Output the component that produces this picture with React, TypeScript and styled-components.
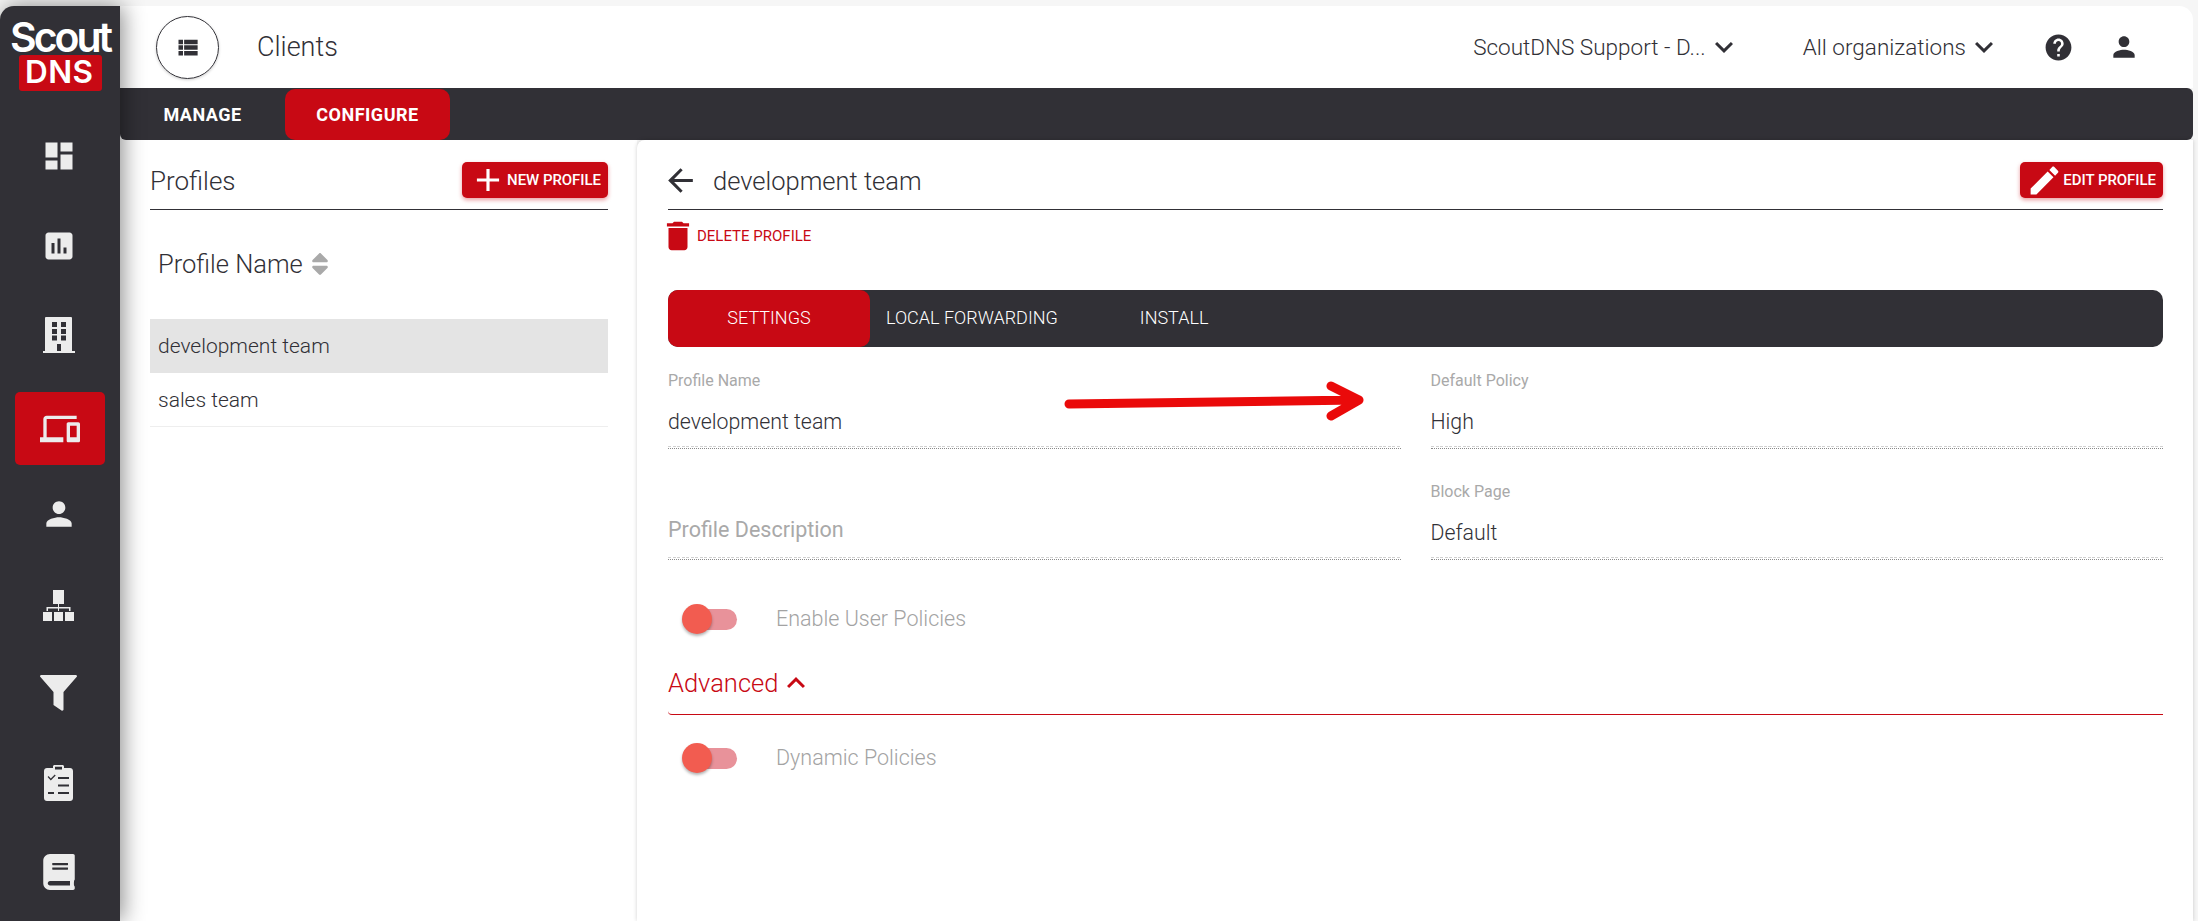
import styled, { createGlobalStyle } from "styled-components";
import { FaBook, FaSort } from "react-icons/fa";

const GlobalStyle = createGlobalStyle`
  html, body {
    margin: 0;
    padding: 0;
    background: #f6f6f6;
    overflow: hidden;
  }
  * {
    box-sizing: border-box;
  }
`;

const RED = "#c80914";
const DARK = "#313036";

const Page = styled.div`
  width: 2198px;
  height: 921px;
  padding: 6px 5px 0 0;
  display: flex;
  overflow: hidden;
  font-family: Roboto, "Liberation Sans", sans-serif;
  color: #313036;
`;

const Sidebar = styled.aside`
  width: 120px;
  flex: none;
  height: 915px;
  background: ${DARK};
  border-top-left-radius: 14px;
  box-shadow: 3px 0 22px rgba(0, 0, 0, 0.45);
  position: relative;
  z-index: 2;
  display: flex;
  flex-direction: column;
  align-items: center;
`;

const LogoMark = styled.svg`
  width: 120px;
  height: 111px;
  flex: none;
  display: block;
  font-family: Inter, sans-serif;
  font-weight: 600;
  fill: #fff;
`;

const NavItem = styled.div<{ $gap: number; $active?: boolean }>`
  width: 90px;
  height: 73px;
  flex: none;
  margin-top: ${(p) => p.$gap}px;
  padding-right: ${(p) => (p.$active ? 0 : 3)}px;
  border-radius: 5px;
  background: ${(p) => (p.$active ? RED : "transparent")};
  color: #ececec;
  display: flex;
  align-items: center;
  justify-content: center;
`;

const Glyph = styled.svg<{ $w: number; $h?: number }>`
  width: ${(p) => p.$w}px;
  height: ${(p) => p.$h ?? p.$w}px;
  flex: none;
  display: block;
  fill: currentColor;
`;

const BookGlyph = styled(FaBook)`
  width: 32px;
  height: 36px;
`;

const SortGlyph = styled(FaSort)`
  width: 18px;
  height: 28px;
  margin-left: 8px;
  color: #a9a9a9;
`;

type IconProps = { d: string; w: number; h?: number };

const Icon = ({ d, w, h }: IconProps) => (
  <Glyph $w={w} $h={h} viewBox="0 0 24 24">
    <path d={d} />
  </Glyph>
);

const paths = {
  dashboard: "M3 13h8V3H3v10zm0 8h8v-6H3v6zm10 0h8V11h-8v10zm0-18v6h8V3h-8z",
  chart:
    "M19 3H5c-1.1 0-2 .9-2 2v14c0 1.1.9 2 2 2h14c1.1 0 2-.9 2-2V5c0-1.1-.9-2-2-2zM9 17H7v-7h2v7zm4 0h-2V7h2v10zm4 0h-2v-4h2v4z",
  devices:
    "M4 6h18V4H4c-1.1 0-2 .9-2 2v11H0v3h14v-3H4V6zm19 2h-6c-.55 0-1 .45-1 1v10c0 .55.45 1 1 1h6c.55 0 1-.45 1-1V9c0-.55-.45-1-1-1zm-1 9h-4v-7h4v7z",
  person:
    "M12 12c2.21 0 4-1.79 4-4s-1.79-4-4-4-4 1.79-4 4 1.79 4 4 4zm0 2c-2.67 0-8 1.34-8 4v2h16v-2c0-2.66-5.33-4-8-4z",
  viewList:
    "M4 14h4v-4H4v4zm0 5h4v-4H4v4zM4 9h4V5H4v4zm5 5h12v-4H9v4zm0 5h12v-4H9v4zM9 5v4h12V5H9z",
  chevronDown: "M16.59 8.59L12 13.17 7.41 8.59 6 10l6 6 6-6z",
  chevronUp: "M12 8l-6 6 1.41 1.41L12 10.83l4.59 4.58L18 14z",
  help: "M12 2C6.48 2 2 6.48 2 12s4.48 10 10 10 10-4.48 10-10S17.52 2 12 2zm1 17h-2v-2h2v2zm2.07-7.75l-.9.92C13.45 12.9 13 13.5 13 15h-2v-.5c0-1.1.45-2.1 1.17-2.83l1.24-1.26c.37-.36.59-.86.59-1.41 0-1.1-.9-2-2-2s-2 .9-2 2H8c0-2.21 1.79-4 4-4s4 1.79 4 4c0 .88-.36 1.68-.93 2.25z",
  plus: "M19 13h-6v6h-2v-6H5v-2h6V5h2v6h6v2z",
  edit: "M3 17.25V21h3.75L17.81 9.94l-3.75-3.75L3 17.25zM20.71 7.04c.39-.39.39-1.02 0-1.41l-2.34-2.34c-.39-.39-1.02-.39-1.41 0l-1.83 1.83 3.75 3.75 1.83-1.83z",
  back: "M20 11H7.83l5.59-5.59L12 4l-8 8 8 8 1.41-1.41L7.83 13H20v-2z",
  trash:
    "M6 19c0 1.1.9 2 2 2h8c1.1 0 2-.9 2-2V7H6v12zM19 4h-3.5l-1-1h-5l-1 1H5v2h14V4z",
};

const BuildingIcon = () => (
  <Glyph $w={32} $h={36} viewBox="0 0 32 36">
    <path
      fillRule="evenodd"
      d="M2 1a1 1 0 0 1 1-1h25a1 1 0 0 1 1 1v33h3v2H0v-2h2V1zm7 4v5h5V5H9zm9 0v5h5V5h-5zM9 12v5h5v-5H9zm9 0v5h5v-5h-5zM9 18.500v5h5v-5H9zm9 0v5h5v-5h-5zM14 27v7h4v-7h-4z"
    />
  </Glyph>
);

const OrgIcon = () => (
  <Glyph $w={31} $h={31} viewBox="0 0 31 31">
    <path d="M10 0h11v14H10zM15 14h1v3h11.500v4h-1.500v-2.500h-10V21h-1v-2.500H5V21H3.500v-4H15zM0 22h9v9H0zM11 22h9v9h-9zM22 22h9v9h-9z" />
  </Glyph>
);

const FilterIcon = () => (
  <Glyph $w={37} $h={36} viewBox="0 0 37 36">
    <path d="M0 1.500C0 .5.5 0 1.500 0h34c1 0 1.500.5 1.500 1.500L23.500 17v17.500c0 1-1 1.500-2 1l-8-5.500V17L0 1.500z" />
  </Glyph>
);

const ChecklistIcon = () => (
  <Glyph $w={29} $h={36} viewBox="0 0 29 36">
    <path
      fillRule="evenodd"
      d="M9 3V1.500C9 .7 9.700 0 10.500 0h8c.8 0 1.500.7 1.500 1.500V3h6c1.700 0 3 1.300 3 3v27c0 1.700-1.300 3-3 3H3c-1.700 0-3-1.300-3-3V6c0-1.700 1.300-3 3-3h6zm2-1.200V4.500h7V1.800h-7zM4.500 11 6.800 13.500l4-4 .9 1-4.900 5-3.200-3.500.9-1zM14 12v2h11v-2H14zM14 19.500v2h11v-2H14zM4 27v2h6v-2H4zm10 0v2h11v-2H14z"
    />
  </Glyph>
);

const Main = styled.div`
  flex: 1;
  min-width: 0;
  display: flex;
  flex-direction: column;
`;

const Header = styled.header`
  height: 82px;
  flex: none;
  background: #fff;
  border-top-right-radius: 14px;
  display: flex;
  align-items: center;
  padding: 0 53px 0 36px;
`;

const RoundButton = styled.div`
  width: 63px;
  height: 63px;
  border-radius: 50%;
  border: 1.5px solid ${DARK};
  box-shadow: 0 1px 3px rgba(0, 0, 0, 0.2);
  display: flex;
  align-items: center;
  justify-content: center;
  color: ${DARK};
`;

const PageTitle = styled.h1`
  margin: 0 auto 0 38px;
  font-weight: 300;
  font-size: 27px;
  line-height: 36px;
`;

const Picker = styled.div<{ $gap: number }>`
  display: flex;
  align-items: center;
  margin-right: ${(p) => p.$gap}px;
  font-weight: 300;
  font-size: 22.5px;
  color: #313036;
`;

const HeaderIcons = styled.div`
  display: flex;
  align-items: center;
  gap: 34px;
  color: ${DARK};
`;

const TopTabs = styled.nav`
  height: 52px;
  flex: none;
  background: ${DARK};
  border-radius: 0 6px 6px 6px;
  display: flex;
`;

const TopTab = styled.div<{ $active?: boolean }>`
  width: 165px;
  height: 51px;
  margin-top: 1px;
  border-radius: 10px;
  background: ${(p) => (p.$active ? RED : "transparent")};
  color: #fff;
  font-weight: 700;
  font-size: 18px;
  letter-spacing: 0.5px;
  display: flex;
  align-items: center;
  justify-content: center;
`;

const Content = styled.div`
  flex: 1;
  min-height: 0;
  display: flex;
`;

const ListPanel = styled.section`
  width: 517px;
  flex: none;
  background: #fff;
  padding: 22px 29px 0 30px;
`;

const DetailPanel = styled.section`
  flex: 1;
  min-width: 0;
  background: #fff;
  border-top-left-radius: 8px;
  box-shadow: 0 0 4px rgba(0, 0, 0, 0.18);
  padding: 22px 30px 0 31px;
  position: relative;
`;

const PanelHeader = styled.div`
  height: 48px;
  border-bottom: 1.5px solid ${DARK};
  padding-bottom: 11px;
  display: flex;
  align-items: center;
  justify-content: space-between;
`;

const PanelTitle = styled.h2`
  margin: 2px 0 0;
  font-weight: 300;
  font-size: 26px;
  line-height: 36px;
`;

const BackTitle = styled.div`
  display: flex;
  align-items: center;
  gap: 14px;
  margin-left: -6px;
`;

const ProfileTitle = styled.h2`
  margin: 2px 0 0;
  font-weight: 300;
  font-size: 25.5px;
  line-height: 36px;
  color: #313036;
`;

const RedButton = styled.div<{ $pad: number }>`
  height: 36px;
  padding: 0 7px 0 ${(p) => p.$pad}px;
  border-radius: 5px;
  background: ${RED};
  box-shadow: 0 2px 4px rgba(200, 9, 20, 0.4);
  color: #fff;
  font-weight: 500;
  font-size: 15px;
  letter-spacing: -0.05px;
  display: flex;
  align-items: center;
  white-space: nowrap;
`;

const ColumnHead = styled.div`
  height: 109px;
  padding: 0 0 2px 8px;
  display: flex;
  align-items: center;
  font-weight: 300;
  font-size: 25.5px;
`;

const ProfileRow = styled.div<{ $selected?: boolean }>`
  height: 54px;
  padding-left: 8px;
  display: flex;
  align-items: center;
  background: ${(p) => (p.$selected ? "#e4e4e4" : "#fff")};
  border-bottom: 1px solid ${(p) => (p.$selected ? "#e4e4e4" : "#eee")};
  font-weight: 300;
  font-size: 21px;
  color: #313036;
`;

const DeleteLink = styled.div`
  height: 27px;
  margin-top: 12px;
  margin-left: -9px;
  display: flex;
  align-items: center;
  color: ${RED};
  font-size: 15px;
`;

const SubTabs = styled.div`
  height: 57px;
  margin-top: 41px;
  border-radius: 10px;
  background: ${DARK};
  display: flex;
  align-items: center;
  color: #fff;
  font-weight: 300;
  font-size: 18px;
`;

const SubTabActive = styled.div`
  width: 202px;
  height: 57px;
  padding-bottom: 2px;
  border-radius: 10px;
  background: ${RED};
  display: flex;
  align-items: center;
  justify-content: center;
`;

const SubTabRest = styled.div`
  display: flex;
  gap: 82px;
  padding: 0 0 2px 16px;
`;

const FormGrid = styled.div`
  margin-top: 24px;
  display: grid;
  grid-template-columns: 1fr 1fr;
  column-gap: 30px;
  row-gap: 33px;
`;

const Field = styled.div`
  height: 78px;
  border-bottom: 1px dotted #8a8a8a;
  display: flex;
  flex-direction: column;
  &::after {
    content: "";
    height: 1px;
    margin: auto 0 1px;
    background: repeating-linear-gradient(90deg, #d2d2d2 0 3px, transparent 3px 4.5px);
  }
`;

const FieldLabel = styled.label`
  height: 20px;
  line-height: 20px;
  font-size: 16px;
  color: #a9a9a9;
`;

const FieldValue = styled.div<{ $placeholder?: boolean }>`
  margin-top: ${(p) => (p.$placeholder ? 34 : 17)}px;
  height: 28px;
  line-height: 28px;
  font-size: ${(p) => (p.$placeholder ? 21.5 : 21.3)}px;
  font-weight: ${(p) => (p.$placeholder ? 400 : 300)};
  color: ${(p) => (p.$placeholder ? "#a9a9a9" : "#313036")};
`;

const ToggleRow = styled.div<{ $top: number }>`
  margin-top: ${(p) => p.$top}px;
  height: 30px;
  padding-left: 14px;
  display: flex;
  align-items: center;
  gap: 39px;
`;

const Track = styled.div`
  width: 55px;
  height: 21px;
  padding-left: 8px;
  position: relative;
  &::before {
    content: "";
    display: block;
    height: 21px;
    border-radius: 11px;
    background: #e8929a;
  }
`;

const Knob = styled.span`
  position: absolute;
  left: 0;
  top: -5px;
  width: 30px;
  height: 30px;
  border-radius: 50%;
  background: #f25c50;
  box-shadow: 0 2px 3px rgba(0, 0, 0, 0.3);
`;

const ToggleLabel = styled.span`
  margin-bottom: 2px;
  font-weight: 300;
  font-size: 21.5px;
  color: #a3a3a3;
`;

const Advanced = styled.div`
  margin-top: 31px;
  height: 50px;
  padding-bottom: 13px;
  border-bottom: 1.5px solid ${RED};
  border-bottom-left-radius: 4px;
  display: flex;
  align-items: center;
  color: ${RED};
  font-weight: 300;
  font-size: 25.5px;
`;

const Annotation = styled.svg`
  position: absolute;
  left: 422px;
  top: 240px;
  width: 310px;
  height: 46px;
  fill: none;
  stroke: #ea0a0a;
  stroke-width: 9px;
  stroke-linecap: round;
  stroke-linejoin: round;
`;

const ProfileList = styled.div``;

export default function App() {
  return (
    <>
      <GlobalStyle />
      <Page>
        <Sidebar>
          <LogoMark viewBox="0 0 120 111">
            <text x="10" y="46" fontSize="41" letterSpacing="-3">
              Scout
            </text>
            <rect x="19" y="49" width="83" height="36" rx="3" fill={RED} />
            <text x="25" y="77" fontSize="31.5" letterSpacing="0.4">
              DNS
            </text>
          </LogoMark>
          <NavItem $gap={2}>
            <Icon d={paths.dashboard} w={36} />
          </NavItem>
          <NavItem $gap={17}>
            <Icon d={paths.chart} w={36} />
          </NavItem>
          <NavItem $gap={16}>
            <BuildingIcon />
          </NavItem>
          <NavItem $gap={21} $active>
            <Icon d={paths.devices} w={40} />
          </NavItem>
          <NavItem $gap={12}>
            <Icon d={paths.person} w={38} />
          </NavItem>
          <NavItem $gap={19}>
            <OrgIcon />
          </NavItem>
          <NavItem $gap={14}>
            <FilterIcon />
          </NavItem>
          <NavItem $gap={17}>
            <ChecklistIcon />
          </NavItem>
          <NavItem $gap={16}>
            <BookGlyph />
          </NavItem>
        </Sidebar>
        <Main>
          <Header>
            <RoundButton>
              <Icon d={paths.viewList} w={27} />
            </RoundButton>
            <PageTitle>Clients</PageTitle>
            <Picker $gap={61}>
              ScoutDNS Support - D...
              <Icon d={paths.chevronDown} w={36} />
            </Picker>
            <Picker $gap={41}>
              All organizations
              <Icon d={paths.chevronDown} w={36} />
            </Picker>
            <HeaderIcons>
              <Icon d={paths.help} w={31} />
              <Icon d={paths.person} w={32} />
            </HeaderIcons>
          </Header>
          <TopTabs>
            <TopTab>MANAGE</TopTab>
            <TopTab $active>CONFIGURE</TopTab>
          </TopTabs>
          <Content>
            <ListPanel>
              <PanelHeader>
                <PanelTitle>Profiles</PanelTitle>
                <RedButton $pad={7}>
                  <Icon d={paths.plus} w={38} />
                  NEW PROFILE
                </RedButton>
              </PanelHeader>
              <ColumnHead>
                Profile Name
                <SortGlyph />
              </ColumnHead>
              <ProfileList>
                <ProfileRow $selected>development team</ProfileRow>
                <ProfileRow>sales team</ProfileRow>
              </ProfileList>
            </ListPanel>
            <DetailPanel>
              <PanelHeader>
                <BackTitle>
                  <Icon d={paths.back} w={37} />
                  <ProfileTitle>development team</ProfileTitle>
                </BackTitle>
                <RedButton $pad={6}>
                  <Icon d={paths.edit} w={37} />
                  EDIT PROFILE
                </RedButton>
              </PanelHeader>
              <DeleteLink>
                <Icon d={paths.trash} w={38} />
                DELETE PROFILE
              </DeleteLink>
              <SubTabs>
                <SubTabActive>SETTINGS</SubTabActive>
                <SubTabRest>
                  <span>LOCAL FORWARDING</span>
                  <span>INSTALL</span>
                </SubTabRest>
              </SubTabs>
              <FormGrid>
                <Field>
                  <FieldLabel>Profile Name</FieldLabel>
                  <FieldValue>development team</FieldValue>
                </Field>
                <Field>
                  <FieldLabel>Default Policy</FieldLabel>
                  <FieldValue>High</FieldValue>
                </Field>
                <Field>
                  <FieldValue $placeholder>Profile Description</FieldValue>
                </Field>
                <Field>
                  <FieldLabel>Block Page</FieldLabel>
                  <FieldValue>Default</FieldValue>
                </Field>
              </FormGrid>
              <ToggleRow $top={44}>
                <Track>
                  <Knob />
                </Track>
                <ToggleLabel>Enable User Policies</ToggleLabel>
              </ToggleRow>
              <Advanced>
                Advanced
                <Icon d={paths.chevronUp} w={36} />
              </Advanced>
              <ToggleRow $top={28}>
                <Track>
                  <Knob />
                </Track>
                <ToggleLabel>Dynamic Policies</ToggleLabel>
              </ToggleRow>
              <Annotation viewBox="0 0 310 46">
                <path d="M10 24 L300 20 M272 6 L300 20 L272 36" />
              </Annotation>
            </DetailPanel>
          </Content>
        </Main>
      </Page>
    </>
  );
}
